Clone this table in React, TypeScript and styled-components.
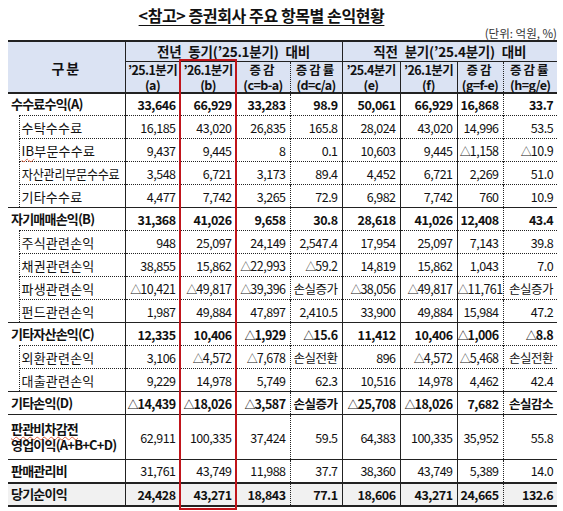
import React from 'react';
import styled, { createGlobalStyle, css } from 'styled-components';

const GlobalStyle = createGlobalStyle`
  html, body { margin: 0; padding: 0; background: #fff; }
  body {
    font-family: 'Noto Sans CJK KR', 'Noto Sans', sans-serif;
    color: #111;
  }
`;

const Page = styled.div`
  width: 563px;
  height: 511px;
  padding: 4px 6px 0 8px;
  box-sizing: border-box;
  overflow: hidden;
`;

const Title = styled.h1`
  margin: 0;
  padding-right: 42px;
  text-align: center;
  font-size: 16px;
  line-height: 22px;
  font-weight: 700;
  letter-spacing: -0.4px;
  text-decoration: underline;
  text-underline-offset: 3px;
`;

const Unit = styled.div`
  text-align: right;
  font-size: 11.5px;
  line-height: 14px;
  color: #333;
`;

const Squiggle = styled.span`
  text-decoration: underline wavy #e0603c;
  text-decoration-thickness: 1px;
  text-underline-offset: 2px;
`;

const TableWrap = styled.div`
  position: relative;
  width: 549px;
`;

const Grid = styled.table`
  border-collapse: collapse;
  table-layout: fixed;
  width: 549px;
`;

const RedBox = styled.div`
  position: absolute;
  left: 171px;
  top: 19px;
  width: 58px;
  height: 451px;
  border: 2px solid #c0151b;
  box-sizing: border-box;
  pointer-events: none;
`;

type Edge = 'solid' | 'dotted' | 'none';

const edge = (e: Edge) => (e === 'none' ? 'none' : `1px ${e} #222`);

const Row = styled.tr<{ $h: number }>`
  height: ${({ $h }) => $h}px;
`;

const HeadCell = styled.th<{ $right: Edge; $top?: boolean; $bottom?: 'thin' | 'thick' }>`
  background: #dbe3f3;
  padding: 0;
  font-weight: 700;
  text-align: center;
  vertical-align: middle;
  white-space: nowrap;
  border-left: none;
  border-right: ${({ $right }) => edge($right)};
  border-top: ${({ $top }) => ($top ? '2px solid #222' : 'none')};
  border-bottom: ${({ $bottom }) =>
    $bottom === 'thick' ? '2px solid #222' : $bottom === 'thin' ? '1px solid #222' : 'none'};
`;

const GroupTitle = styled.span`
  display: block;
  font-size: 13.5px;
  line-height: 17px;
  word-spacing: 4px;
  letter-spacing: -0.2px;
`;

const KeyTitle = styled.span`
  font-size: 14px;
  letter-spacing: 2px;
`;

const HeadLine = styled.span<{ $spaced?: boolean }>`
  display: block;
  font-size: 12.5px;
  line-height: 15px;
  letter-spacing: ${({ $spaced }) => ($spaced ? '2px' : '-0.6px')};
`;

const BodyCell = styled.td<{ $top: Edge | 'thick'; $right: Edge; $bottom?: boolean; $shade?: boolean }>`
  padding: 0 4px 0 0;
  border-left: none;
  border-right: ${({ $right }) => edge($right)};
  border-top: ${({ $top }) => ($top === 'thick' ? '2px solid #222' : edge($top))};
  border-bottom: ${({ $bottom }) => ($bottom ? '2px solid #222' : 'none')};
  background: ${({ $shade }) => ($shade ? '#f1f1f1' : 'transparent')};
  vertical-align: middle;
`;

const Blank = styled.td`
  padding: 0;
  border: none;
  border-right: 1px dotted #222;
`;

const Label = styled.div<{ $major?: boolean; $squeeze?: boolean }>`
  white-space: nowrap;
  ${({ $major }) =>
    $major
      ? css`
          padding-left: 3px;
          font-size: 13px;
          font-weight: 700;
          letter-spacing: -0.8px;
          line-height: 16px;
        `
      : css`
          padding-left: 2px;
          font-size: 13px;
          letter-spacing: 0.2px;
        `}
  ${({ $squeeze }) =>
    $squeeze &&
    css`
      letter-spacing: -0.3px;
      transform: scaleX(0.93);
      transform-origin: left center;
    `}
`;

const Num = styled.div<{ $bold?: boolean }>`
  text-align: right;
  white-space: nowrap;
  font-size: 12.5px;
  letter-spacing: -0.5px;
  font-weight: ${({ $bold }) => ($bold ? 700 : 400)};
`;

const Delta = styled.span`
  font-size: 11px;
  margin-right: -0.5px;
`;

type Kind = 'major' | 'sub' | 'total';

interface Item {
  label: React.ReactNode;
  kind: Kind;
  vals: string[];
  bold?: boolean;
  squeeze?: boolean;
  tall?: boolean;
}

const rows: Item[] = [
  { label: '수수료수익(A)', kind: 'major', bold: true, vals: ['33,646', '66,929', '33,283', '98.9', '50,061', '66,929', '16,868', '33.7'] },
  { label: '수탁수수료', kind: 'sub', vals: ['16,185', '43,020', '26,835', '165.8', '28,024', '43,020', '14,996', '53.5'] },
  { label: <><Squiggle>IB</Squiggle>부문수수료</>, kind: 'sub', vals: ['9,437', '9,445', '8', '0.1', '10,603', '9,445', '△1,158', '△10.9'] },
  { label: '자산관리부문수수료', kind: 'sub', squeeze: true, vals: ['3,548', '6,721', '3,173', '89.4', '4,452', '6,721', '2,269', '51.0'] },
  { label: '기타수수료', kind: 'sub', vals: ['4,477', '7,742', '3,265', '72.9', '6,982', '7,742', '760', '10.9'] },
  { label: '자기매매손익(B)', kind: 'major', bold: true, vals: ['31,368', '41,026', '9,658', '30.8', '28,618', '41,026', '12,408', '43.4'] },
  { label: '주식관련손익', kind: 'sub', vals: ['948', '25,097', '24,149', '2,547.4', '17,954', '25,097', '7,143', '39.8'] },
  { label: '채권관련손익', kind: 'sub', vals: ['38,855', '15,862', '△22,993', '△59.2', '14,819', '15,862', '1,043', '7.0'] },
  { label: '파생관련손익', kind: 'sub', vals: ['△10,421', '△49,817', '△39,396', '손실증가', '△38,056', '△49,817', '△11,761', '손실증가'] },
  { label: '펀드관련손익', kind: 'sub', vals: ['1,987', '49,884', '47,897', '2,410.5', '33,900', '49,884', '15,984', '47.2'] },
  { label: '기타자산손익(C)', kind: 'major', bold: true, vals: ['12,335', '10,406', '△1,929', '△15.6', '11,412', '10,406', '△1,006', '△8.8'] },
  { label: '외환관련손익', kind: 'sub', vals: ['3,106', '△4,572', '△7,678', '손실전환', '896', '△4,572', '△5,468', '손실전환'] },
  { label: '대출관련손익', kind: 'sub', vals: ['9,229', '14,978', '5,749', '62.3', '10,516', '14,978', '4,462', '42.4'] },
  { label: '기타손익(D)', kind: 'major', bold: true, vals: ['△14,439', '△18,026', '△3,587', '손실증가', '△25,708', '△18,026', '7,682', '손실감소'] },
  {
    label: <><Squiggle>판관비차감전</Squiggle><br />영업이익(A+B+C+D)</>,
    kind: 'major',
    tall: true,
    vals: ['62,911', '100,335', '37,424', '59.5', '64,383', '100,335', '35,952', '55.8'],
  },
  { label: '판매관리비', kind: 'major', vals: ['31,761', '43,749', '11,988', '37.7', '38,360', '43,749', '5,389', '14.0'] },
  { label: '당기순이익', kind: 'total', bold: true, vals: ['24,428', '43,271', '18,843', '77.1', '18,606', '43,271', '24,665', '132.6'] },
];

const rightEdges: Edge[] = ['solid', 'solid', 'solid', 'dotted', 'solid', 'solid', 'solid', 'dotted', 'none'];

const colWidths = [11, 106, 55, 56, 54, 52, 58, 57, 46, 54];

const subHeads: [string, string, boolean][] = [
  ['’25.1분기', '(a)', false],
  ['’26.1분기', '(b)', false],
  ['증감', '(c=b-a)', true],
  ['증감률', '(d=c/a)', true],
  ['’25.4분기', '(e)', false],
  ['’26.1분기', '(f)', false],
  ['증감', '(g=f-e)', true],
  ['증감률', '(h=g/e)', true],
];

const renderValue = (v: string) =>
  v.startsWith('△') ? (
    <>
      <Delta>△</Delta>
      {v.slice(1)}
    </>
  ) : (
    v
  );

const groupSize = (i: number) => {
  let n = 0;
  while (rows[i + n] && rows[i + n].kind === 'sub') n += 1;
  return n;
};

export default function App() {
  return (
    <>
      <GlobalStyle />
      <Page>
        <Title>&lt;참고&gt; 증권회사 주요 항목별 손익현황</Title>
        <Unit>
          (단위: <Squiggle>억원</Squiggle>, %)
        </Unit>
        <TableWrap>
          <Grid>
            <colgroup>
              {colWidths.map((w, i) => (
                <col key={i} style={{ width: w }} />
              ))}
            </colgroup>
            <thead>
              <Row $h={20}>
                <HeadCell rowSpan={2} colSpan={2} $right="solid" $top $bottom="thick">
                  <KeyTitle>구분</KeyTitle>
                </HeadCell>
                <HeadCell colSpan={4} $right="solid" $top $bottom="thin">
                  <GroupTitle>전년 동기(’25.1분기) 대비</GroupTitle>
                </HeadCell>
                <HeadCell colSpan={4} $right="none" $top $bottom="thin">
                  <GroupTitle>직전 분기(’25.4분기) 대비</GroupTitle>
                </HeadCell>
              </Row>
              <Row $h={31}>
                {subHeads.map(([top, bottom, spaced], i) => (
                  <HeadCell key={i} $right={rightEdges[i + 1]} $bottom="thick">
                    <HeadLine $spaced={spaced}>{top}</HeadLine>
                    <HeadLine>{bottom}</HeadLine>
                  </HeadCell>
                ))}
              </Row>
            </thead>
            <tbody>
              {rows.map((r, i) => {
                const isSub = r.kind === 'sub';
                const isTotal = r.kind === 'total';
                const firstOfGroup = isSub && rows[i - 1].kind !== 'sub';
                const top: Edge | 'thick' = isTotal ? 'thick' : isSub ? 'dotted' : 'solid';
                return (
                  <Row key={i} $h={r.tall ? 45 : 23}>
                    {firstOfGroup && <Blank rowSpan={groupSize(i)} />}
                    <BodyCell
                      colSpan={isSub ? 1 : 2}
                      $top={top}
                      $right="solid"
                      $bottom={isTotal}
                      $shade={isTotal}
                      style={isSub ? { borderLeft: '1px dotted #222' } : undefined}
                    >
                      <Label $major={!isSub} $squeeze={r.squeeze}>
                        {r.label}
                      </Label>
                    </BodyCell>
                    {r.vals.map((v, j) => (
                      <BodyCell key={j} $top={top} $right={rightEdges[j + 1]} $bottom={isTotal} $shade={isTotal}>
                        <Num $bold={r.bold}>{renderValue(v)}</Num>
                      </BodyCell>
                    ))}
                  </Row>
                );
              })}
            </tbody>
          </Grid>
          <RedBox />
        </TableWrap>
      </Page>
    </>
  );
}
